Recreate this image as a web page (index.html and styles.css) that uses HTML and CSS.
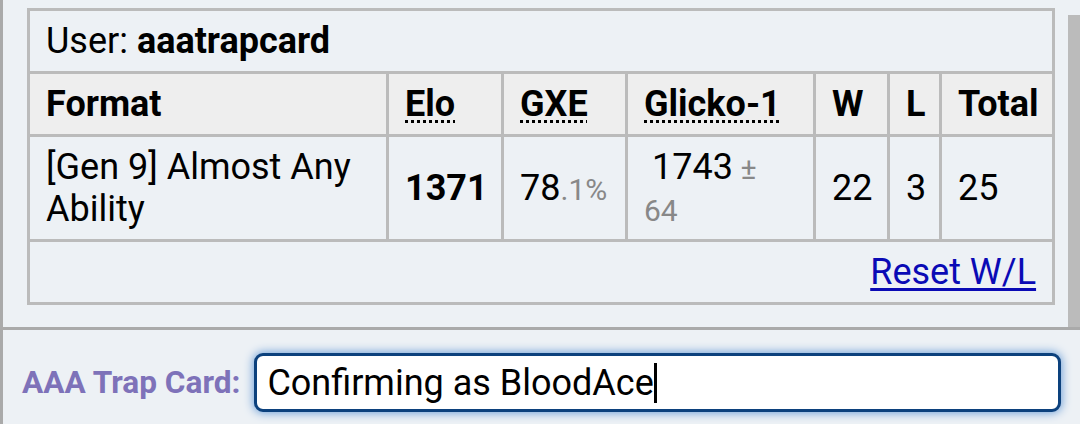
FILE: index.html
```html
<!DOCTYPE html>
<html>
<head>
<meta charset="utf-8">
<link rel="stylesheet" href="styles.css">
</head>
<body>
<div class="app">
  <div class="log">
    <div class="log-content">
      <table class="ladder">
        <colgroup>
          <col class="c-format"><col class="c-elo"><col class="c-gxe"><col class="c-glicko"><col class="c-w"><col class="c-l"><col class="c-total">
        </colgroup>
        <tr><td colspan="7" class="user-row">User: <strong>aaatrapcard</strong></td></tr>
        <tr class="head">
          <th>Format</th>
          <th><abbr title="Elo rating">Elo</abbr></th>
          <th><abbr title="user's percentage chance of winning a random battle">GXE</abbr></th>
          <th><abbr title="Glicko-1 rating">Glicko-1</abbr></th>
          <th>W</th>
          <th>L</th>
          <th>Total</th>
        </tr>
        <tr>
          <td>[Gen 9] Almost Any Ability</td>
          <td><strong>1371</strong></td>
          <td>78<small>.1%</small></td>
          <td><span class="lead">1743</span><small> ± 64</small></td>
          <td>22</td>
          <td>3</td>
          <td>25</td>
        </tr>
        <tr><td colspan="7" class="foot"><a href="#">Reset W/L</a></td></tr>
      </table>
    </div>
    <div class="scroll"><div class="thumb"></div></div>
  </div>
  <div class="compose">
    <label class="who">AAA Trap Card:</label>
    <div class="textbox">Confirming as BloodAce<span class="caret"></span></div>
  </div>
</div>
</body>
</html>
```

FILE: styles.css
```css
html, body {
  margin: 0;
  padding: 0;
  background: #edf1f5;
  font-family: Roboto, "Noto Sans", sans-serif;
  color: #000;
}
.app {
  height: 424px;
  border-left: 3px solid #aaaaaa;
  display: flex;
  flex-direction: column;
  overflow: hidden;
}
.log {
  height: 330px;
  border-bottom: 3px solid #aaaaaa;
  display: flex;
  box-sizing: border-box;
  flex: none;
}
.log-content {
  flex: 1;
  padding: 8px 0 0 24px;
}
.scroll {
  width: 12px;
  padding-top: 15px;
}
.thumb {
  height: 312px;
  background: #bbbbbb;
}
.ladder {
  border-collapse: collapse;
  table-layout: fixed;
  width: 1028px;
  border: 3px solid #bbbbbb;
  font-size: 36px;
  line-height: 42px;
}
.c-format { width: 359px; }
.c-elo { width: 115px; }
.c-gxe { width: 124px; }
.c-glicko { width: 188px; }
.c-w { width: 74px; }
.c-l { width: 52px; }
.c-total { width: 113px; }
.ladder td, .ladder th {
  border: 3px solid #bbbbbb;
  padding: 9px 16px;
  text-align: left;
  vertical-align: middle;
}
.ladder th {
  background: #eeeeee;
  font-weight: bold;
}
.ladder abbr {
  text-decoration: underline dotted;
  text-decoration-thickness: 3px;
  text-underline-offset: 4px;
}
.ladder small {
  color: #888888;
  font-size: 30px;
  line-height: 1;
}
.lead {
  padding-left: 8px;
}
.foot {
  text-align: right !important;
}
.foot a {
  color: #0a0ab5;
  text-decoration: underline;
  text-decoration-thickness: 3px;
  text-underline-offset: 4px;
}
.compose {
  flex: 1;
  display: flex;
  align-items: center;
  padding: 23px 0 12px 19px;
  gap: 14px;
  box-sizing: border-box;
}
.who {
  color: #7e72b9;
  font-weight: bold;
  font-size: 31.6px;
}
.textbox {
  width: 807px;
  height: 59px;
  box-sizing: border-box;
  border: 3px solid #0c417d;
  border-radius: 9px;
  background: #fff;
  box-shadow: 0 0 10px 1px #6d9fd8;
  font-size: 36px;
  padding: 0 0 0 10px;
  display: flex;
  align-items: center;
  white-space: pre;
}
.caret {
  display: inline-block;
  width: 3px;
  height: 40px;
  background: #000;
}
```
